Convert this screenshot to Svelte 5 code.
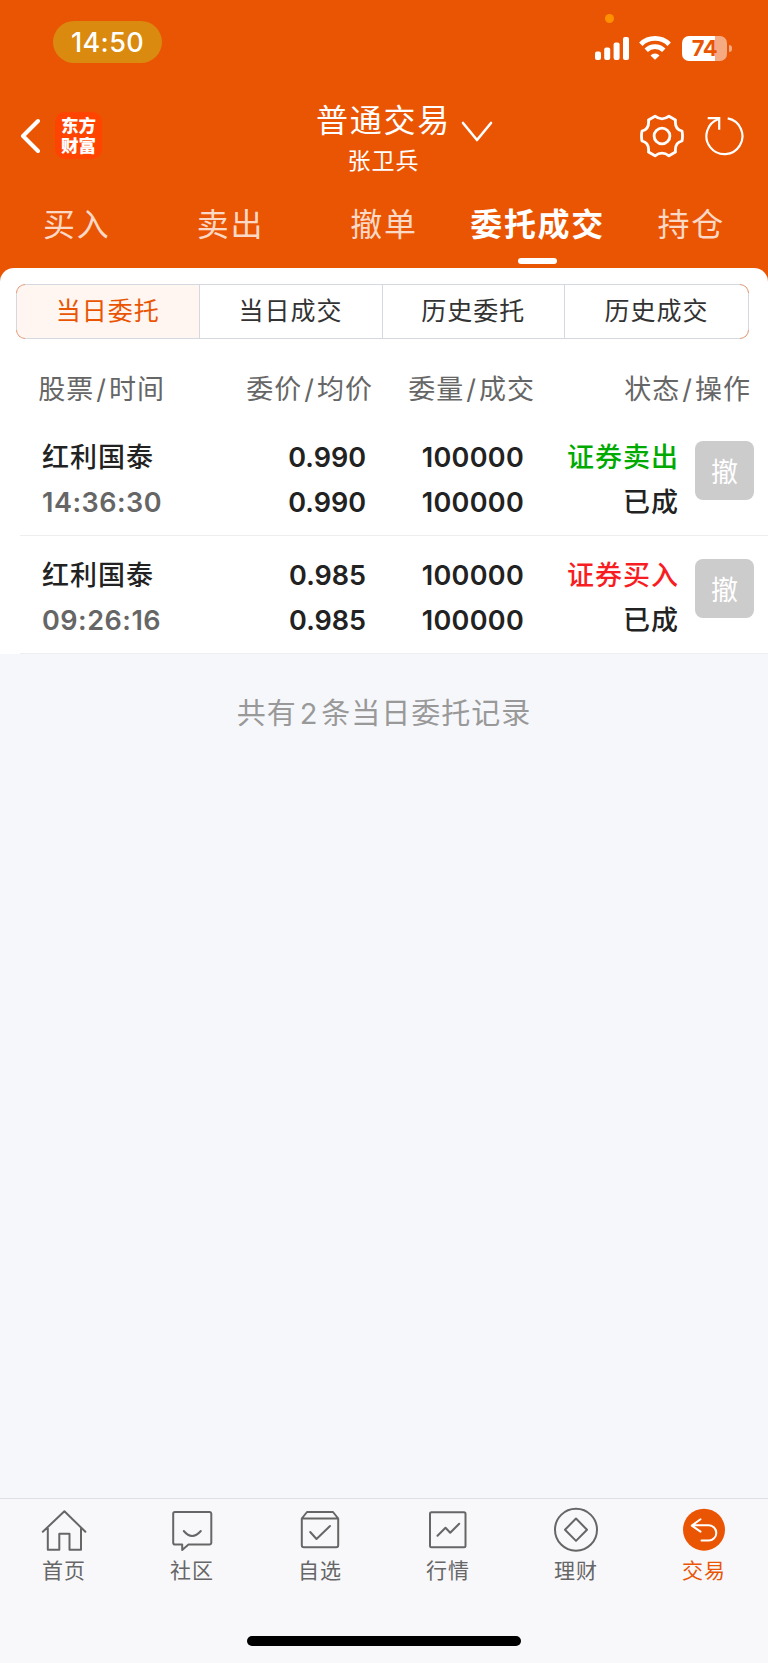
<script>
  const tabs = ['买入', '卖出', '撤单', '委托成交', '持仓'];
  const filters = ['当日委托', '当日成交', '历史委托', '历史成交'];
  const columns = [
    ['股票', '时间'],
    ['委价', '均价'],
    ['委量', '成交'],
    ['状态', '操作']
  ];

  const orders = [
    { name: '红利国泰', time: '14:36:30', price: '0.990', avg: '0.990', amount: '100000', filled: '100000', type: '证券卖出', side: 'sell', status: '已成' },
    { name: '红利国泰', time: '09:26:16', price: '0.985', avg: '0.985', amount: '100000', filled: '100000', type: '证券买入', side: 'buy', status: '已成' }
  ];

  const navItems = [
    { id: 'home', label: '首页' },
    { id: 'community', label: '社区' },
    { id: 'watchlist', label: '自选' },
    { id: 'market', label: '行情' },
    { id: 'wealth', label: '理财' },
    { id: 'trade', label: '交易' }
  ];

  let activeTab = $state(3);
  let activeFilter = $state(0);
  let activeNav = $state('trade');
</script>

<div class="app">
  <header class="header">
    <div class="status">
      <span class="status__time">14:50</span>
      <div class="status__icons">
        <i class="status__dot"></i>
        <svg class="signal" width="34" height="24" viewBox="0 0 34 24" fill="#fff">
          <rect x="0" y="15.5" width="6" height="8.5" rx="2" />
          <rect x="9.2" y="11.5" width="6" height="12.5" rx="2" />
          <rect x="18.6" y="6.5" width="6" height="17.5" rx="2" />
          <rect x="28" y="1" width="6" height="23" rx="2" />
        </svg>
        <svg class="wifi" width="32" height="24" viewBox="0 0 32 24">
          <g fill="none" stroke="#fff" stroke-width="4.8">
            <path d="M1.8 8.2a20.4 20.4 0 0 1 28.4 0" />
            <path d="M7.2 14.2a12.6 12.6 0 0 1 17.6 0" />
          </g>
          <path d="M16 23.7l-4.5-4.3a6.5 6.5 0 0 1 9 0z" fill="#fff" />
        </svg>
        <div class="battery"><span>74</span></div>
      </div>
    </div>

    <div class="titlebar">
      <div class="titlebar__left">
        <svg width="20" height="36" viewBox="0 0 20 36" fill="none" stroke="#fff" stroke-width="4" stroke-linecap="round" stroke-linejoin="round">
          <path d="M18 3L3 18l15 15" />
        </svg>
        <div class="logo"><span>东方</span><span>财富</span></div>
      </div>
      <div class="titlebar__center">
        <h1>
          普通交易
          <svg class="titlebar__arrow" width="32" height="22" viewBox="0 0 32 22" fill="none" stroke="#fff" stroke-width="2.6" stroke-linecap="round" stroke-linejoin="round">
            <path d="M2 2l14 17L30 2" />
          </svg>
        </h1>
        <p>张卫兵</p>
      </div>
      <div class="titlebar__right">
        <svg width="44" height="44" viewBox="-22 -22 44 44" fill="none" stroke="#fff" stroke-width="2.8" stroke-linejoin="round">
          <circle r="7.9" />
          <path d="M-7-19.8Q0-14.5 7-19.8L13.5-16Q12.5-6.5 20-5Q21 0 20 5Q12.5 6.5 13.5 16L7 19.8Q0 14.5-7 19.8L-13.5 16Q-12.5 6.5-20 5Q-21 0-20-5Q-12.5-6.5-13.5-16Z" />
        </svg>
        <svg width="40" height="42" viewBox="0 0 40 42" fill="none" stroke="#fff" stroke-width="2.2">
          <path d="M23.7 4.4A18 18 0 1 1 14.8 5" />
          <path d="M3.7 4.2h11.5v11.5" />
        </svg>
      </div>
    </div>

    <nav class="tabs">
      {#each tabs as tab, i}
        <button class="tab" class:tab--active={activeTab === i} onclick={() => (activeTab = i)}>{tab}</button>
      {/each}
    </nav>
  </header>

  <main class="panel">
    <div class="filters">
      {#each filters as filter, i}
        <button class="filter" class:filter--active={activeFilter === i} onclick={() => (activeFilter = i)}>{filter}</button>
      {/each}
    </div>

    <div class="columns">
      {#each columns as [first, second]}
        <span>{first}<i>/</i>{second}</span>
      {/each}
    </div>

    {#each orders as order}
      <div class="order">
        <div class="order__cell order__cell--left">
          <span class="cjk">{order.name}</span>
          <span class="order__time">{order.time}</span>
        </div>
        <div class="order__cell">
          <span>{order.price}</span>
          <span>{order.avg}</span>
        </div>
        <div class="order__cell order__cell--qty">
          <span>{order.amount}</span>
          <span>{order.filled}</span>
        </div>
        <div class="order__cell">
          <span class="cjk {order.side}">{order.type}</span>
          <span class="cjk">{order.status}</span>
        </div>
        <button class="cancel" disabled>撤</button>
      </div>
    {/each}
  </main>

  <p class="summary">共有<span>2</span>条当日委托记录</p>

  <footer class="bottom">
    <nav class="bottom__nav">
      {#each navItems as item}
        <button class="nav-item" class:nav-item--active={activeNav === item.id} onclick={() => (activeNav = item.id)}>
          <svg width="48" height="48" viewBox="0 0 48 48" fill="none" stroke="currentColor" stroke-width="2" stroke-linejoin="round" stroke-linecap="round">
            {#if item.id === 'home'}
              <path d="M2.8 25.8L24.4 5.2l21 20.6M7.8 22v21.8h11.5V27.8h10.2v16h11.5V22" />
            {:else if item.id === 'community'}
              <path d="M7 6h34.5a1.8 1.8 0 0 1 1.8 1.8v29a1.8 1.8 0 0 1-1.8 1.8H20.5L14.2 44v-5.4H7a1.8 1.8 0 0 1-1.8-1.8v-29A1.8 1.8 0 0 1 7 6z" />
              <path d="M15.8 25q8.2 10 17 0" />
            {:else if item.id === 'watchlist'}
              <path d="M5.8 12.5L11 6h26l5.2 6.5v26.7a2 2 0 0 1-2 2H7.8a2 2 0 0 1-2-2zM5.8 12.5h36.4" />
              <path d="M14.2 26l6.3 7 13.5-13" />
            {:else if item.id === 'market'}
              <rect x="6" y="6.2" width="35.5" height="35" rx="1.5" />
              <path d="M13.5 29.7l8-8 4.7 5 9-9" />
            {:else if item.id === 'wealth'}
              <circle cx="24" cy="23.7" r="21" />
              <path d="M24 12.5l11 11.2-11 11.2-11-11.2z" />
            {:else}
              <circle cx="24" cy="23.7" r="21" fill="currentColor" stroke="none" />
              <path d="M20.5 13.3l-8.7 6.3 8.7 6M12.5 19.3h16.2a7.6 7.6 0 0 1 0 15.2H21.5" stroke="#fff" />
            {/if}
          </svg>
          <span>{item.label}</span>
        </button>
      {/each}
    </nav>
    <div class="home-indicator"></div>
  </footer>
</div>

<style>
  :global(body) {
    margin: 0;
    background: #f6f7fa;
  }

  .app {
    display: flex;
    flex-direction: column;
    width: 768px;
    height: 1663px;
    overflow: hidden;
    background: #f6f7fa;
    color: #222;
    font-family: Inter, "Noto Sans CJK SC", sans-serif;
    font-weight: 400;
  }

  button {
    padding: 0;
    border: 0;
    background: none;
    color: inherit;
    font: inherit;
  }

  h1,
  p {
    margin: 0;
    font-weight: 400;
  }

  svg {
    display: block;
  }

  /* Header */
  .header {
    height: 282px;
    flex: none;
    background: #ea5504;
    color: #fff;
  }

  .status {
    display: flex;
    justify-content: space-between;
    height: 96px;
    box-sizing: border-box;
    padding: 21px 41px 0 53px;
  }

  .status__time {
    width: 109px;
    height: 42px;
    border-radius: 21px;
    background: #d98a0f;
    font-size: 27px;
    font-weight: 500;
    line-height: 43px;
    letter-spacing: 0.4px;
    text-align: center;
  }

  .status__icons {
    position: relative;
    display: flex;
    align-items: flex-start;
    height: 40px;
    padding-top: 15px;
  }

  .status__dot {
    position: absolute;
    top: -7px;
    left: 10px;
    width: 9px;
    height: 9px;
    border-radius: 50%;
    background: #ff9100;
  }

  .wifi {
    margin-left: 10px;
  }

  .battery {
    position: relative;
    width: 45px;
    height: 25px;
    margin-left: 11px;
    border-radius: 7px;
    background: linear-gradient(90deg, #fff 33px, #f5aa82 33px);
    color: #ea5504;
    font-size: 22px;
    font-weight: 700;
    line-height: 25px;
    letter-spacing: -0.5px;
    text-align: center;
  }

  .battery::after {
    content: '';
    position: absolute;
    top: 9px;
    right: -5px;
    width: 3px;
    height: 7px;
    border-radius: 0 3px 3px 0;
    background: #f5aa82;
  }

  .titlebar {
    display: grid;
    grid-template-columns: 1fr auto 1fr;
    align-items: start;
    height: 93px;
    padding: 0 23px 0 20px;
  }

  .titlebar__left {
    display: flex;
    align-items: center;
    gap: 15px;
    padding-top: 16px;
  }

  .logo {
    display: flex;
    flex-direction: column;
    justify-content: center;
    width: 47px;
    height: 47px;
    border-radius: 10px;
    background: #ff4400;
    font-size: 17.5px;
    font-weight: 900;
    line-height: 19.5px;
    text-align: center;
  }

  .titlebar__center {
    padding: 1px 0 0 2px;
    text-align: center;
  }

  .titlebar__center h1 {
    position: relative;
    font-size: 32px;
    line-height: 48px;
    letter-spacing: 1.7px;
  }

  .titlebar__center p {
    font-size: 23px;
    line-height: 32px;
    letter-spacing: 1px;
  }

  .titlebar__arrow {
    position: absolute;
    top: 24px;
    left: calc(100% + 10px);
  }

  .titlebar__right {
    display: flex;
    justify-content: flex-end;
    gap: 20px;
    padding: 18px 1px 0 0;
  }

  .tabs {
    display: grid;
    grid-template-columns: repeat(5, 1fr);
    height: 79px;
  }

  .tab {
    position: relative;
    height: 70px;
    color: #fbd9c6;
    font-size: 32px;
    line-height: 72px;
    letter-spacing: 1.7px;
  }

  .tab--active {
    color: #fff;
    font-weight: 700;
  }

  .tab--active::after {
    content: '';
    position: absolute;
    bottom: -5px;
    left: 50%;
    width: 39px;
    height: 6px;
    margin-left: -19.5px;
    border-radius: 3px;
    background: #fff;
  }

  /* Orders */
  .panel {
    margin-top: -14px;
    padding-top: 16px;
    border-radius: 14px 14px 0 0;
    background: #fff;
  }

  .filters {
    position: relative;
    display: grid;
    grid-template-columns: repeat(4, 1fr);
    height: 55px;
    box-sizing: border-box;
    margin: 0 19px 0 16px;
    border: 1px solid #d5d8de;
    border-radius: 9px;
  }

  /* tinted corners of the segmented control */
  .filters::after {
    content: '';
    position: absolute;
    inset: -1px;
    border: 1px solid #ee9468;
    border-radius: 9px;
    mask-image: linear-gradient(90deg, #000 9px, transparent 9px, transparent calc(100% - 9px), #000 calc(100% - 9px)),
      linear-gradient(#000 9px, transparent 9px, transparent calc(100% - 9px), #000 calc(100% - 9px));
    mask-composite: intersect;
    pointer-events: none;
  }

  .filter {
    height: 53px;
    border-right: 1px solid #d5d8de;
    color: #333;
    font-size: 25px;
    line-height: 53px;
    letter-spacing: 1px;
  }

  .filter:last-child {
    border-right: 0;
  }

  .filter--active {
    border-radius: 8px 0 0 8px;
    background: #fff5f1;
    color: #ea5504;
  }

  .columns {
    display: grid;
    grid-template-columns: 128px 208px 162px 216px;
    padding: 32px 0 9px 37px;
    color: #666;
    font-size: 27px;
    line-height: 38px;
    letter-spacing: 1px;
    text-align: right;
    white-space: nowrap;
  }

  .columns i {
    margin: 0 2px;
    font-style: normal;
  }

  .order {
    display: grid;
    grid-template-columns: 121px 203px 158px 155px 59px;
    height: 118px;
    box-sizing: border-box;
    margin-left: 20px;
    padding: 20px 0 0 22px;
    border-bottom: 1px solid #eee;
    font-size: 27px;
    font-weight: 600;
  }

  .order__cell {
    display: flex;
    flex-direction: column;
    align-items: flex-end;
    gap: 5px;
    line-height: 40px;
    white-space: nowrap;
  }

  .order__cell--left {
    align-items: flex-start;
  }

  .order__cell--qty {
    letter-spacing: 0.3px;
  }

  .order__time {
    color: #666;
    letter-spacing: 0.5px;
  }

  .cjk {
    font-weight: 500;
    letter-spacing: 1px;
  }

  .sell {
    color: #0a0;
  }

  .buy {
    color: #f81d22;
  }

  .cancel {
    width: 59px;
    height: 59px;
    margin: 3px 0 0 16px;
    border-radius: 8px;
    background: #ccc;
    color: #fff;
    font-size: 27px;
    font-weight: 400;
  }

  .summary {
    padding-top: 39px;
    color: #999;
    font-size: 29px;
    line-height: 42px;
    letter-spacing: 1px;
    text-align: center;
  }

  .summary span {
    margin: 0 3px;
  }

  /* Bottom bar */
  .bottom {
    height: 165px;
    box-sizing: border-box;
    margin-top: auto;
    border-top: 1px solid #dedfe2;
    background: #f8f8fb;
  }

  .bottom__nav {
    display: grid;
    grid-template-columns: repeat(6, 1fr);
    height: 137px;
    padding-top: 7px;
    box-sizing: border-box;
  }

  .nav-item {
    display: flex;
    flex-direction: column;
    align-items: center;
    color: #666;
    font-size: 21px;
    line-height: 34px;
    letter-spacing: 1px;
  }

  .nav-item--active {
    color: #ea5504;
  }

  .home-indicator {
    width: 274px;
    height: 10px;
    margin: 0 auto;
    border-radius: 5px;
    background: #000;
  }
</style>
